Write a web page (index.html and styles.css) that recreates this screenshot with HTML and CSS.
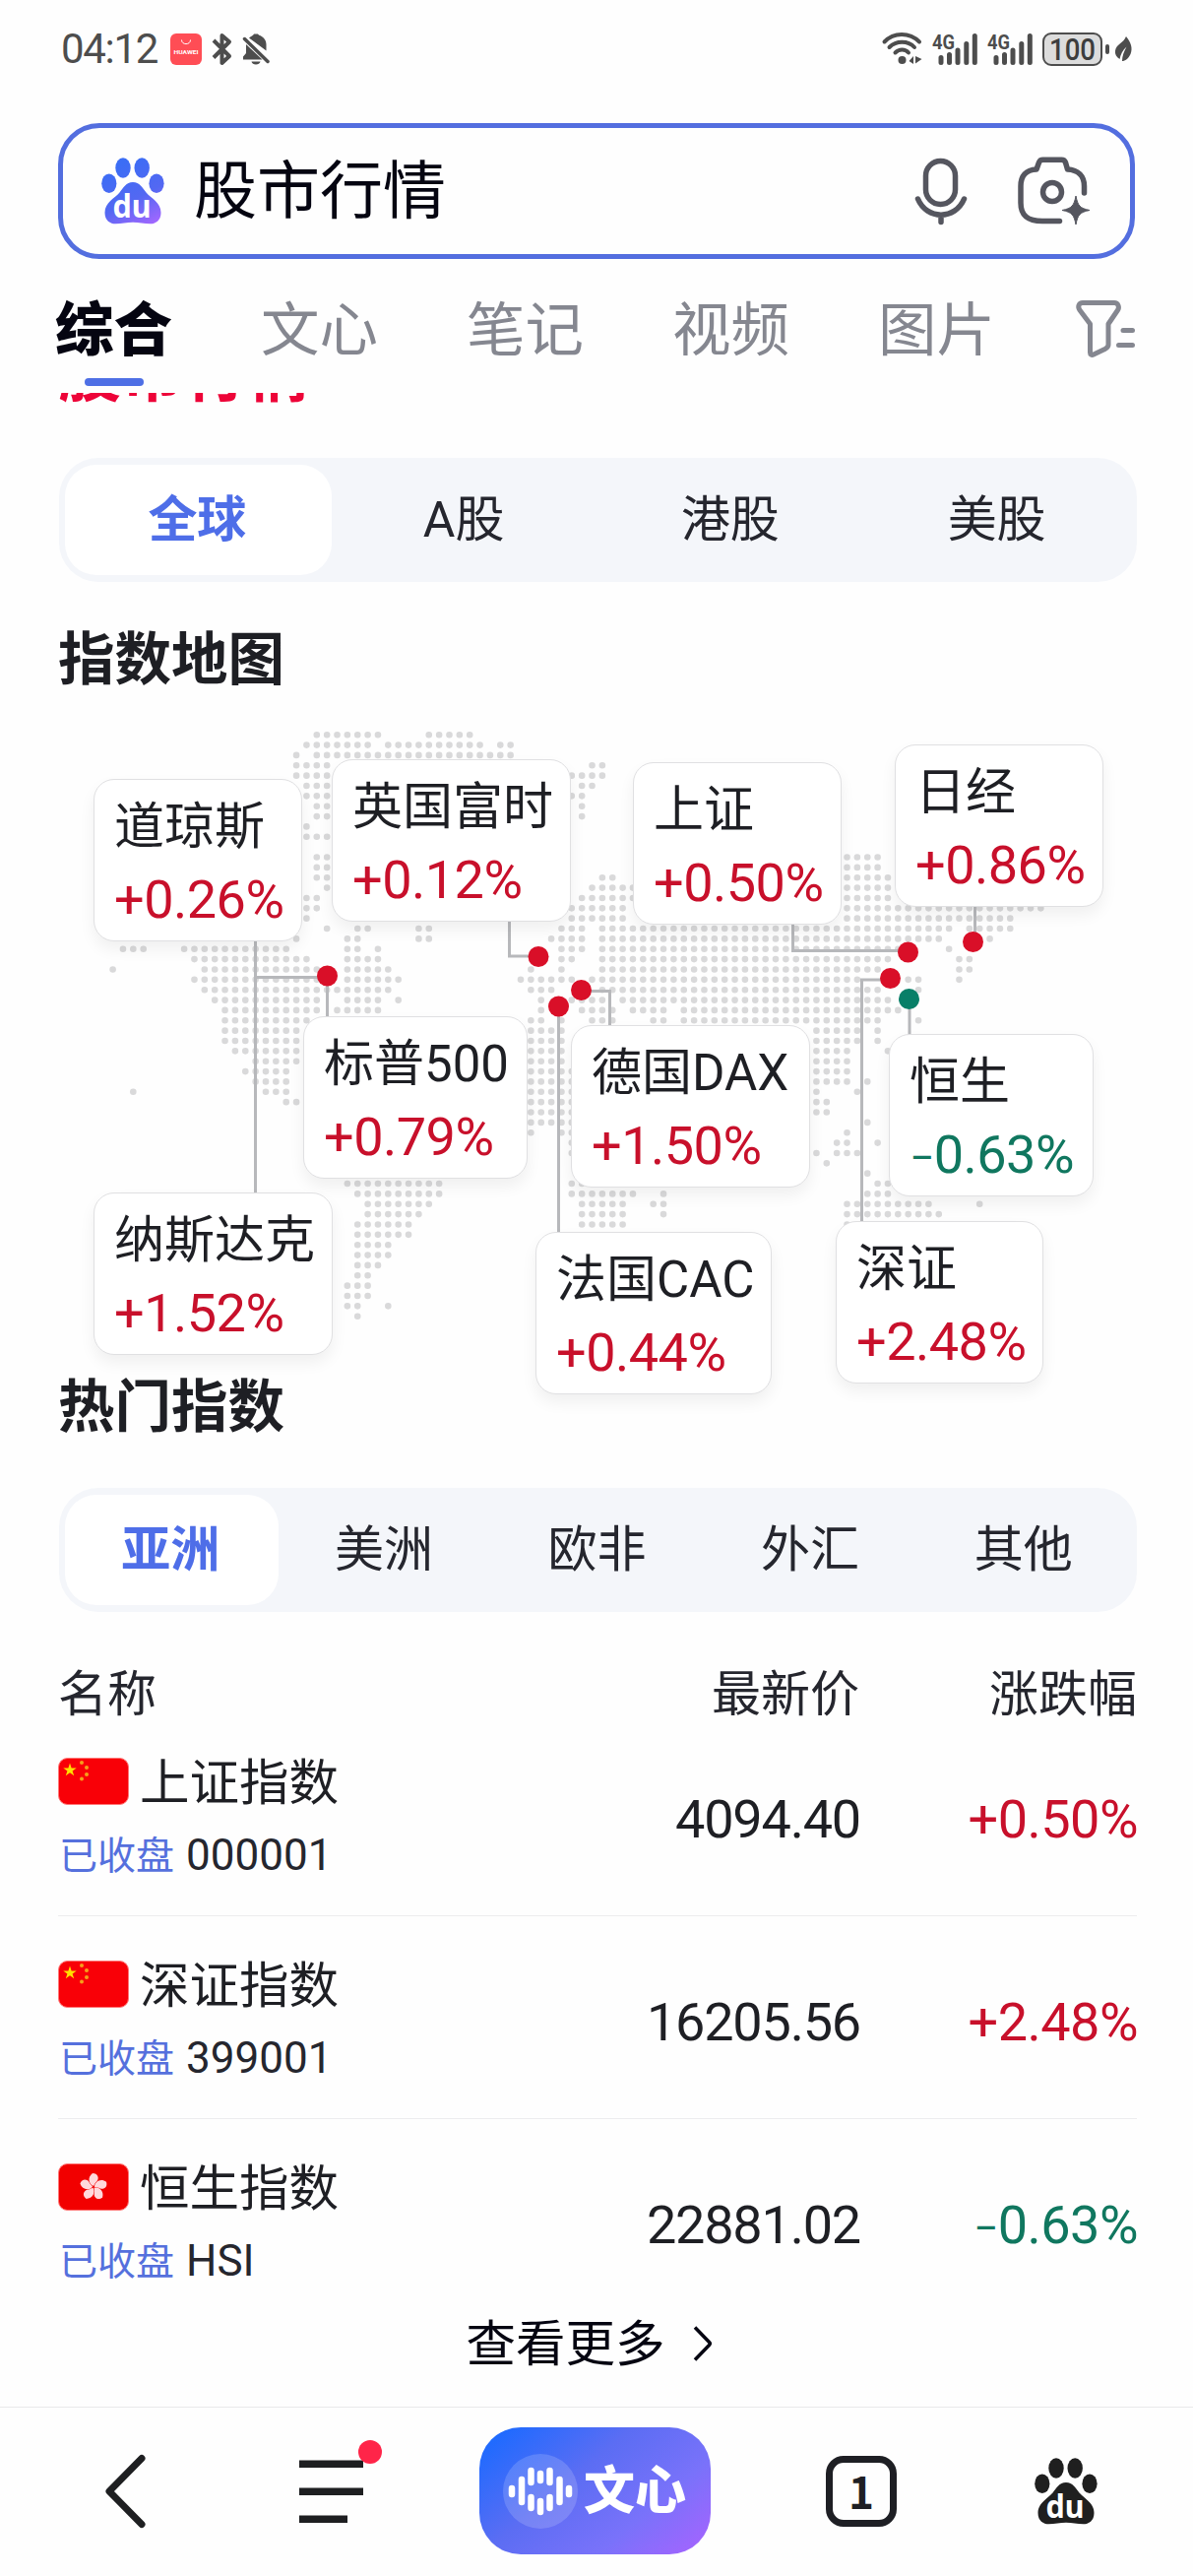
FILE: index.html
```html
<!DOCTYPE html>
<html lang="zh-CN">
<head>
<meta charset="utf-8">
<title>股市行情</title>
<link rel="stylesheet" href="styles.css">
</head>
<body>
<div class="page">
  <header class="status">
    <span class="clock">04:12</span>
    <svg class="ic-huawei" width="32" height="32" viewBox="0 0 32 32"><rect width="32" height="32" rx="6" fill="#ff4d55"/><path d="M11.5 6.500c0 5.500 9 5.500 9 0" fill="none" stroke="#fff" stroke-width="1"/><text class="huawei-text" x="16" y="20.500" text-anchor="middle" textLength="25" lengthAdjust="spacingAndGlyphs">HUAWEI</text></svg>
    <svg class="ic-bt" width="22" height="34" viewBox="0 0 22 34"><path d="M2 8 18 24 10.500 31V3L18 9.500 2 25.500" fill="none" stroke="#4d4d4d" stroke-width="4" stroke-linejoin="round"/></svg>
    <svg class="ic-bell" width="28" height="34" viewBox="0 0 28 34"><path d="M7 5.500C10 3 11.500 3 12 1.500h4C16 3 24.500 4 24.500 12v6.500zM4 12 20.500 27.500H1v-3l3-3.500zM9.500 29.500h9c-.5 4-8.500 4-9 0z" fill="#4d4d4d"/><path d="M2.500 6.500 26 29.500" stroke="#4d4d4d" stroke-width="3.500" stroke-linecap="round"/></svg>
    <svg class="ic-wifi" width="41" height="33" viewBox="0 0 41 33" fill="none" stroke="#4d4d4d" stroke-width="4" stroke-linecap="round"><path d="M2.500 9.500C12-.5 28-.5 38 9.500M7.500 15c7-7 19-7 25.500 0M13.500 20.500c4-4 10-4 13.500 0"/><circle cx="20.500" cy="28" r="4" fill="#4d4d4d" stroke="none"/><path d="M32 24v8l-4.500-3zM34 24v7.500l6.500-4.500z" fill="#4d4d4d" stroke="none"/></svg>
    <svg class="ic-signal" width="46" height="34" viewBox="0 0 46 34"><text class="net-text" x="0" y="17" textLength="23" lengthAdjust="spacingAndGlyphs">4G</text><path d="M9 25.500v5M17.500 22.500v8M26 18v12.500M34.800 11.500v19M43.300 3.500v27" stroke="#4d4d4d" stroke-width="5" stroke-linecap="round"/></svg>
    <svg class="ic-signal" width="46" height="34" viewBox="0 0 46 34"><text class="net-text" x="0" y="17" textLength="23" lengthAdjust="spacingAndGlyphs">4G</text><path d="M9 25.500v5M17.500 22.500v8M26 18v12.500M34.800 11.500v19M43.300 3.500v27" stroke="#4d4d4d" stroke-width="5" stroke-linecap="round"/></svg>
    <svg class="ic-battery" width="68" height="34" viewBox="0 0 68 34"><rect x="1" y="1" width="59" height="32" rx="8" fill="#dcdcdc" stroke="#4d4d4d" stroke-width="2"/><rect x="64" y="12" width="4" height="10" rx="2" fill="#4d4d4d"/><text class="battery-text" x="30.500" y="28" text-anchor="middle" textLength="47" lengthAdjust="spacingAndGlyphs">100</text></svg>
    <svg class="ic-leaf" width="18" height="28" viewBox="0 0 18 28"><path d="M12 1c5 6 7 12 4.500 18-2 4.500-5.500 7-8.500 7 0-5 2-10 4.500-14.500C8.500 15 6.500 19 5.500 24 2 22 .5 19 1 15.500 2 8.500 9.500 8 12 1z" fill="#4d4d4d"/></svg>
  </header>

  <div class="search">
    <svg class="paw" width="64" height="68" viewBox="0 0 64 68">
      <defs><linearGradient id="pawGrad" gradientUnits="userSpaceOnUse" x1="20" y1="6" x2="52" y2="68"><stop offset="0" stop-color="#3b6df5"/><stop offset=".55" stop-color="#5368f2"/><stop offset="1" stop-color="#a267ff"/></linearGradient></defs>
      <g fill="url(#pawGrad)"><ellipse cx="22" cy="10.500" rx="7.700" ry="10.300"/><ellipse cx="41.200" cy="10.500" rx="7.700" ry="10.300"/><ellipse cx="7.800" cy="26.200" rx="7.600" ry="9.800"/><ellipse cx="56" cy="26.200" rx="7.600" ry="9.800"/><path d="M32 25c7 0 9.500 5.500 13.500 10.500C50.500 41.500 60.500 45.500 60.500 56c0 8-5.500 11.300-11 11.300-6 0-11.500-1.500-17.500-1.500s-11.500 1.500-17.500 1.500C9 67.300 3.500 64 3.500 56 3.500 45.500 13.500 41.500 18.500 35.500 22.500 30.500 25 25 32 25z"/></g>
      <text class="du" x="31" y="60.500" text-anchor="middle" textLength="39" lengthAdjust="spacingAndGlyphs">du</text>
    </svg>
    <span class="query">股市行情</span>
    <svg class="ic-mic" width="54" height="68" viewBox="0 0 54 68" fill="none" stroke="#55565f" stroke-width="5.500" stroke-linecap="round"><rect x="11.500" y="3.500" width="30" height="44" rx="15"/><path d="M3.500 42c9 21.500 38 21.500 47 0M27 59v6.500"/></svg>
    <svg class="ic-camera" width="76" height="70" viewBox="0 0 76 70"><g fill="none" stroke="#55565f" stroke-width="5.500" stroke-linecap="round" stroke-linejoin="round"><path d="M43.500 65.500H26C11 65.500 4 60 4 47V30c0-10 5-16.500 16-17l2.500-7c.8-2 2-2.700 4-2.700h19c2 0 3.200.7 4 2.700l2 7c11 .5 17 7 17 17v7"/><circle cx="36" cy="36" r="9.500"/></g><path d="M60 40c2 10 4 12.500 14 14.500-10 2-12 4.500-14 14.500-2-10-4-12.500-14-14.500 10-2 12-4.500 14-14.500z" fill="#55565f" stroke="#55565f" stroke-width="1" stroke-linejoin="round"/></svg>
  </div>

  <nav class="tabs">
    <span class="tab tab-on">综合</span><span class="tab">文心</span><span class="tab">笔记</span><span class="tab">视频</span><span class="tab">图片</span>
    <svg class="ic-filter" width="61" height="58" viewBox="0 0 61 58" fill="none" stroke="#858790" stroke-width="5" stroke-linejoin="round" stroke-linecap="round"><path d="M8 3.500h32c4 0 5.500 4.500 3.500 7.500L34 25v21c0 2-1 3-3 4.200L19 56c-2 1-3.500 0-3.500-2V25L5 11C2.500 7.500 4 3.500 8 3.500z"/><path d="M49 31.500h9.500M44.500 46.500h14"/></svg>
  </nav>

  <main class="content">
    <div class="peek"><span class="peek-title">股市行情</span></div>

    <div class="segment">
      <span class="seg seg-on">全球</span><span class="seg"><span class="latin">A</span>股</span><span class="seg">港股</span><span class="seg">美股</span>
    </div>

    <h2 class="heading heading-map">指数地图</h2>
    <section class="map">
      <svg class="map-art" width="1212" height="650" viewBox="0 741 1212 650">
        <g transform="translate(114.600 746.200) scale(10.360)">
          <path class="land" d="M20 0H26.100M31 0H35.100
M19 1H25.100M27 1H36.100M38 1H39.100
M18 2H18.100M20 2H39.100
M18 3H21.100M47 3H48.100
M18 4H21.100M45 4H48.100
M19 5H21.100M46 5H47.100
M19 6H21.100M45 6H46.100
M20 7H21.100M46 7H46.100
M20 8H21.100M46 8H46.100
M19 9H19.100
M19 10H21.100
M20 12H21.100M72 12H75.100
M20 13H21.100M72 13H75.100
M20 14H21.100M48 14H49.100M72 14H76.100
M21 15H21.100M47 15H51.100M72 15H76.100
M19 16H20.100M46 16H51.100M72 16H76.100
M19 17H20.100M45 17H50.100M72 17H91.100
M19 18H19.100M45 18H50.100M72 18H88.100
M21 19H21.100M24 19H25.100M30 19H31.100M44 19H46.100M48 19H82.100M84 19H88.100
M18 20H18.100M23 20H24.100M30 20H31.100M43 20H46.100M48 20H81.100M85 20H86.100
M1 21H3.100M7 21H17.100M23 21H24.100M26 21H26.100M44 21H46.100M48 21H77.100M82 21H82.100
M8 22H19.100M23 22H26.100M44 22H45.100M48 22H76.100M83 22H84.100
M0 23H.1M9 23H20.100M23 23H27.100M41 23H41.100M44 23H44.100M48 23H75.100M83 23H84.100
M8 24H20.100M23 24H28.100M40 24H45.100M47 24H73.100M78 24H79.100M83 24H83.100
M9 25H21.100M22 25H27.100M41 25H43.100M48 25H75.100M79 25H79.100
M10 26H20.100M23 26H26.100M28 26H28.100M42 26H42.100M45 26H48.100M50 26H76.100
M11 27H20.100M22 27H26.100M42 27H42.100M46 27H49.100M51 27H54.100M56 27H77.100
M11 28H19.100M41 28H42.100M44 28H44.100M47 28H49.100M53 28H54.100M56 28H75.100M79 28H79.100
M11 29H18.100M41 29H44.100M69 29H73.100M75 29H75.100
M11 30H18.100M41 30H44.100M69 30H73.100M75 30H75.100
M12 31H18.100M41 31H44.100M69 31H72.100M76 31H76.100
M14 32H18.100M41 32H44.100M69 32H72.100
M13 33H17.100M41 33H45.100M69 33H72.100
M14 34H17.100M41 34H45.100M69 34H72.100M74 34H74.100
M2 35H2.100M15 35H17.100M41 35H45.100M69 35H69.100M73 35H73.100
M17 36H18.100M41 36H45.100M69 36H70.100
M41 37H45.100M69 37H70.100
M41 38H45.100M74 38H74.100
M41 39H41.100M44 39H45.100M72 39H72.100
M45 40H45.100M71 40H72.100M75 40H75.100
M45 41H45.100M69 41H69.100M71 41H73.100
M70 42H70.100
M74 43H74.100
M23 44H32.100M45 44H50.100M75 44H76.100
M24 45H32.100M45 45H51.100M54 45H54.100M74 45H76.100
M25 46H31.100M46 46H50.100M53 46H54.100M72 46H80.100M85 46H85.100
M25 47H30.100M46 47H50.100M54 47H54.100M72 47H81.100
M24 48H29.100M46 48H50.100M72 48H72.100
M24 49H29.100
M24 50H27.100
M24 51H27.100
M24 52H26.100
M24 53H25.100
M23 54H25.100
M23 55H25.100
M23 56H24.100M27 56H27.100
M24 57H24.100"/>
        </g>
        <path class="lead" d="M259.500 950V1215M259.500 992.500H332.500V1036M517.500 930V971H547M567.500 1022V1255M591 1006.500H619.500V1045M805.500 935V965.500H922M990.500 915V957M904 995H875.500V1245M924 1015V1055"/>
        <g fill="#d90f28"><circle cx="332.500" cy="991" r="10.500"/><circle cx="547" cy="971.500" r="10.500"/><circle cx="590.500" cy="1005.500" r="10.500"/><circle cx="567.500" cy="1022" r="10.500"/><circle cx="922.500" cy="967" r="10.500"/><circle cx="988.500" cy="956.500" r="10.500"/><circle cx="904.500" cy="993.500" r="10.500"/></g>
        <circle cx="923.500" cy="1014.500" r="10.500" fill="#087f68"/>
      </svg>
      <div class="card dji"><span class="card-name">道琼斯</span><span class="card-pct up">+0.26%</span></div>
      <div class="card ftse"><span class="card-name">英国富时</span><span class="card-pct up">+0.12%</span></div>
      <div class="card sse"><span class="card-name">上证</span><span class="card-pct up">+0.50%</span></div>
      <div class="card nikkei"><span class="card-name">日经</span><span class="card-pct up">+0.86%</span></div>
      <div class="card spx"><span class="card-name">标普<span class="latin">500</span></span><span class="card-pct up">+0.79%</span></div>
      <div class="card dax"><span class="card-name">德国<span class="latin">DAX</span></span><span class="card-pct up">+1.50%</span></div>
      <div class="card hsi"><span class="card-name">恒生</span><span class="card-pct down"><span class="minus">−</span>0.63%</span></div>
      <div class="card ixic"><span class="card-name">纳斯达克</span><span class="card-pct up">+1.52%</span></div>
      <div class="card cac"><span class="card-name">法国<span class="latin">CAC</span></span><span class="card-pct up">+0.44%</span></div>
      <div class="card szse"><span class="card-name">深证</span><span class="card-pct up">+2.48%</span></div>
    </section>

    <h2 class="heading heading-hot">热门指数</h2>
    <div class="segment">
      <span class="seg seg-on">亚洲</span><span class="seg">美洲</span><span class="seg">欧非</span><span class="seg">外汇</span><span class="seg">其他</span>
    </div>

    <div class="row row-head"><span>名称</span><span class="num">最新价</span><span class="num">涨跌幅</span></div>
    <div class="row row-item">
      <div class="idx">
        <div class="idx-line"><svg width="72" height="48" viewBox="0 0 72 48"><use href="#flagCn"/></svg><span class="idx-name">上证指数</span></div>
        <div class="idx-sub"><span class="closed">已收盘</span><span class="code">000001</span></div>
      </div>
      <span class="val">4094.40</span><span class="val pct up">+0.50%</span>
    </div>
    <div class="row row-item">
      <div class="idx">
        <div class="idx-line"><svg width="72" height="48" viewBox="0 0 72 48"><use href="#flagCn"/></svg><span class="idx-name">深证指数</span></div>
        <div class="idx-sub"><span class="closed">已收盘</span><span class="code">399001</span></div>
      </div>
      <span class="val">16205.56</span><span class="val pct up">+2.48%</span>
    </div>
    <div class="row row-item row-last">
      <div class="idx">
        <div class="idx-line"><svg width="72" height="48" viewBox="0 0 72 48"><rect x=".5" y=".5" width="71" height="47" rx="9" fill="#f20000" stroke="#f77" stroke-width="1"/><g fill="#ffd9dc" transform="translate(36 24)"><path id="petal" d="M0-1C-5-3-6.500-10-1-14 4.500-14 6-9 3.500-6 1.500-4.500 1.500-3 0-1z"/><use href="#petal" transform="rotate(72)"/><use href="#petal" transform="rotate(144)"/><use href="#petal" transform="rotate(216)"/><use href="#petal" transform="rotate(288)"/></g></svg><span class="idx-name">恒生指数</span></div>
        <div class="idx-sub"><span class="closed">已收盘</span><span class="code">HSI</span></div>
      </div>
      <span class="val">22881.02</span><span class="val pct down"><span class="minus">−</span>0.63%</span>
    </div>

    <div class="more"><span>查看更多</span><svg width="22" height="38" viewBox="0 0 22 38"><path d="M3 2.500 17.500 17.500Q19 19 17.500 20.500L3 35.500" fill="none" stroke="#050511" stroke-width="3.500"/></svg></div>
  </main>

  <footer class="bar">
    <svg class="b-back" width="43" height="76" viewBox="0 0 43 76"><path d="M38 4.500 5 38 38 71.500" fill="none" stroke="#1e1f21" stroke-width="7" stroke-linecap="round" stroke-linejoin="round"/></svg>
    <svg class="b-menu" width="84" height="84" viewBox="0 0 84 84"><path d="M0 24.200H65M0 52.200H65M0 80.200H49" stroke="#1e1f21" stroke-width="7.500"/><circle cx="72" cy="12" r="12" fill="#ff2549"/></svg>
    <div class="wenxin">
      <svg width="76" height="76" viewBox="0 0 76 76"><circle cx="38" cy="38" r="38" fill="#fff" fill-opacity=".16"/><path d="M9 35v6M19 26v23M28.500 17v12M38 20v7M47.500 17v12M57.500 26v23M67 35v6M28.500 44v11M38 48v11M47.500 44v11" stroke="#fff" stroke-width="6.500" stroke-linecap="round"/></svg>
      <span>文心</span>
    </div>
    <span class="b-tabs">1</span>
    <svg class="b-paw" width="64" height="68" viewBox="0 0 64 68"><g fill="#1f1f1f"><ellipse cx="22" cy="10.500" rx="7.700" ry="10.300"/><ellipse cx="41.200" cy="10.500" rx="7.700" ry="10.300"/><ellipse cx="7.800" cy="26.200" rx="7.600" ry="9.800"/><ellipse cx="56" cy="26.200" rx="7.600" ry="9.800"/><path d="M32 25c7 0 9.500 5.500 13.500 10.500C50.500 41.500 60.500 45.500 60.500 56c0 8-5.500 11.300-11 11.300-6 0-11.500-1.500-17.500-1.500s-11.500 1.500-17.500 1.500C9 67.300 3.500 64 3.500 56 3.500 45.500 13.500 41.500 18.500 35.500 22.500 30.500 25 25 32 25z"/></g><text class="du" x="31" y="60.500" text-anchor="middle" textLength="39" lengthAdjust="spacingAndGlyphs">du</text></svg>
  </footer>
</div>

<svg class="defs" width="0" height="0">
  <defs>
    <g id="flagCn"><rect x=".5" y=".5" width="71" height="47" rx="9" fill="#f90007" stroke="#f77" stroke-width="1"/><path d="M12 5.500 13.600 10.500H18.700L14.600 13.400 16.200 18.200 12 15.300 7.800 18.200 9.400 13.400 5.300 10.500H10.400z" fill="#ffe100"/><g fill="#f5a01a"><circle cx="24" cy="5" r="2"/><circle cx="29" cy="10" r="2"/><circle cx="29" cy="17" r="2"/><circle cx="24" cy="21.500" r="2"/></g></g>
  </defs>
</svg>
</body>
</html>
```
FILE: styles.css
```css
* { box-sizing: border-box; }
body {
  margin: 0;
  background: #fefefe;
  color: #1e1f24;
  font-family: "Noto Sans CJK SC", sans-serif;
}
svg { display: block; flex: none; overflow: visible; }
.defs { position: absolute; }
.page {
  width: 1212px;
  height: 2616px;
  overflow: hidden;
  display: flex;
  flex-direction: column;
}

/* status bar */
.status {
  height: 99px;
  padding-left: 62px;
  display: flex;
  align-items: center;
  flex: none;
}
.clock {
  width: 111px;
  font: 400 42px/50px Roboto, sans-serif;
  letter-spacing: -1.3px;
  color: #4d4d4d;
}
.huawei-text { font: 700 6px Roboto, sans-serif; fill: #fff; }
.net-text { font: 700 21px Roboto, sans-serif; fill: #4d4d4d; }
.battery-text { font: 500 32px Roboto, sans-serif; fill: #3d3d3d; }
.ic-bt { margin-left: 10px; }
.ic-bell { margin-left: 9px; }
.ic-wifi { margin-left: 622px; }
.ic-signal { margin-left: 10px; }
.ic-battery { margin-left: 10px; }
.ic-leaf { margin-left: 5px; }

/* search box */
.search {
  height: 138px;
  margin: 26px 59px 0;
  padding: 0 39px 0 39px;
  border: 5px solid #536edf;
  border-radius: 42px;
  display: flex;
  align-items: center;
  flex: none;
}
.query {
  margin-left: 30px;
  margin-top: -12px;
  flex: 1;
  font-size: 64px;
  line-height: 64px;
  color: #050511;
}
.ic-mic { margin-right: 50px; }
.du { font: 700 33px "Noto Sans", sans-serif; fill: #fff; }

/* result tabs */
.tabs {
  height: 136px;
  padding: 37px 58px 0 56px;
  display: flex;
  gap: 91px;
  flex: none;
}
.tab {
  width: 118px;
  font-size: 59.500px;
  line-height: 60px;
  color: #858790;
  white-space: nowrap;
}
.tab-on { color: #050511; font-weight: 900; }
.tab-on::after {
  content: "";
  display: block;
  width: 60px;
  height: 8px;
  margin: 24px 0 0 30px;
  border-radius: 4px;
  background: #4e6fe5;
}
.ic-filter { margin: 4px 0 0 -9px; }

/* content */
.content { height: 2045px; flex: none; }
.peek { height: 66px; overflow: hidden; padding-left: 59px; }
.peek-title {
  display: block;
  margin-top: -57px;
  font-size: 64px;
  line-height: 64px;
  font-weight: 700;
  color: #ed0438;
}
.segment {
  height: 126px;
  margin: 0 57px 0 60px;
  padding: 7px 6px;
  border-radius: 40px;
  background: #f4f6fa;
  display: flex;
}
.seg {
  flex: 1;
  padding-right: 2px;
  border-radius: 32px;
  text-align: center;
  font-size: 50px;
  line-height: 103px;
  color: #25262e;
}
.seg-on { background: #fff; color: #4e6ee8; font-weight: 700; }
.latin { font-family: Roboto, sans-serif; }
.heading { margin: 0; padding-left: 59px; font-size: 57.500px; font-weight: 700; color: #1e1f24; }
.heading-map { line-height: 149px; height: 150px; }
.heading-hot { line-height: 66px; height: 120px; position: relative; }

/* index map */
.map { position: relative; height: 650px; }
.land {
  fill: none;
  stroke: #d9d9da;
  stroke-width: .64;
  stroke-linecap: round;
  stroke-dasharray: 0 1;
}
.lead { fill: none; stroke: #b7b8bb; stroke-width: 3; }
.card {
  position: absolute;
  height: 165px;
  padding: 18px 0 0 20px;
  border: 1px solid #e0e0e2;
  border-radius: 21px;
  background: #fff;
  box-shadow: 0 8px 16px rgba(0, 0, 0, .06);
  white-space: nowrap;
}
.card-name, .card-pct { display: block; }
.card-name { font-size: 51px; line-height: 50px; height: 50px; }
.card-pct { margin-top: 24px; font: 400 54px/60px Roboto, sans-serif; letter-spacing: -.5px; }
.minus { font-size: 44px; }
.up { color: #c8102b; }
.down { color: #10775f; }
.dji { left: 95px; top: 50px; width: 212px; }
.ftse { left: 337px; top: 30px; width: 243px; }
.sse { left: 643px; top: 33px; width: 212px; }
.nikkei { left: 909px; top: 15px; width: 212px; }
.spx { left: 308px; top: 291px; width: 228px; }
.dax { left: 580px; top: 300px; width: 243px; }
.hsi { left: 903px; top: 309px; width: 208px; }
.ixic { left: 95px; top: 470px; width: 243px; }
.cac { left: 544px; top: 510px; width: 240px; }
.szse { left: 849px; top: 499px; width: 211px; }

/* index table */
.row {
  margin: 0 57px 0 59px;
  display: grid;
  grid-template-columns: 1fr 320px 282px;
}
.row-head { height: 103px; padding-top: 54px; font-size: 50px; line-height: 50px; color: #25262e; }
.num { text-align: right; }
.row-item { height: 206px; border-bottom: 1px solid #ececee; }
.row-last { border-bottom-color: transparent; }
.idx { padding-top: 45px; }
.idx-line { display: flex; height: 48px; gap: 11px; }
.idx-name { font-size: 50.500px; line-height: 42px; }
.idx-sub { display: flex; gap: 12px; margin-top: 27px; padding-left: 1px; line-height: 48px; }
.closed { font-size: 39px; line-height: 42px; color: #5570dd; }
.code { font: 400 44px/49px Roboto, sans-serif; color: #25262e; }
.val {
  padding-top: 81px;
  margin-right: -1px;
  text-align: right;
  font: 400 54px/54px Roboto, sans-serif;
  letter-spacing: -1.2px;
}
.pct { letter-spacing: -.5px; }
.more {
  display: flex;
  justify-content: center;
  align-items: center;
  gap: 27px;
  height: 44px;
  padding-right: 14px;
  font-size: 50.500px;
  line-height: 38px;
  color: #050511;
}
.more span { margin-top: -8px; }

/* bottom bar */
.bar {
  height: 172px;
  flex: none;
  border-top: 1px solid #e9e9ea;
  background: #fefefe;
  display: flex;
}
.b-back { margin: 47px 0 0 106px; }
.b-menu { margin: 33px 0 0 155px; }
.wenxin {
  width: 235px;
  height: 129px;
  margin: 20px 0 0 99px;
  padding-left: 24px;
  border-radius: 42px;
  background: linear-gradient(140deg, #1b6aff 5%, #5b6df3 40%, #7972fa 70%, #a962ff 100%);
  display: flex;
  align-items: center;
  gap: 6px;
  color: #fff;
  font-size: 52px;
  font-weight: 900;
  line-height: 52px;
}
.wenxin span { margin-top: -7px; }
.b-tabs {
  width: 72px;
  height: 72px;
  margin: 49px 0 0 117px;
  border: 7px solid #1e1f24;
  border-radius: 18px;
  text-align: center;
  font: 700 44px/56px "Noto Sans CJK SC", sans-serif;
  color: #1e1f24;
}
.b-paw { margin: 51px 0 0 140px; }
```
